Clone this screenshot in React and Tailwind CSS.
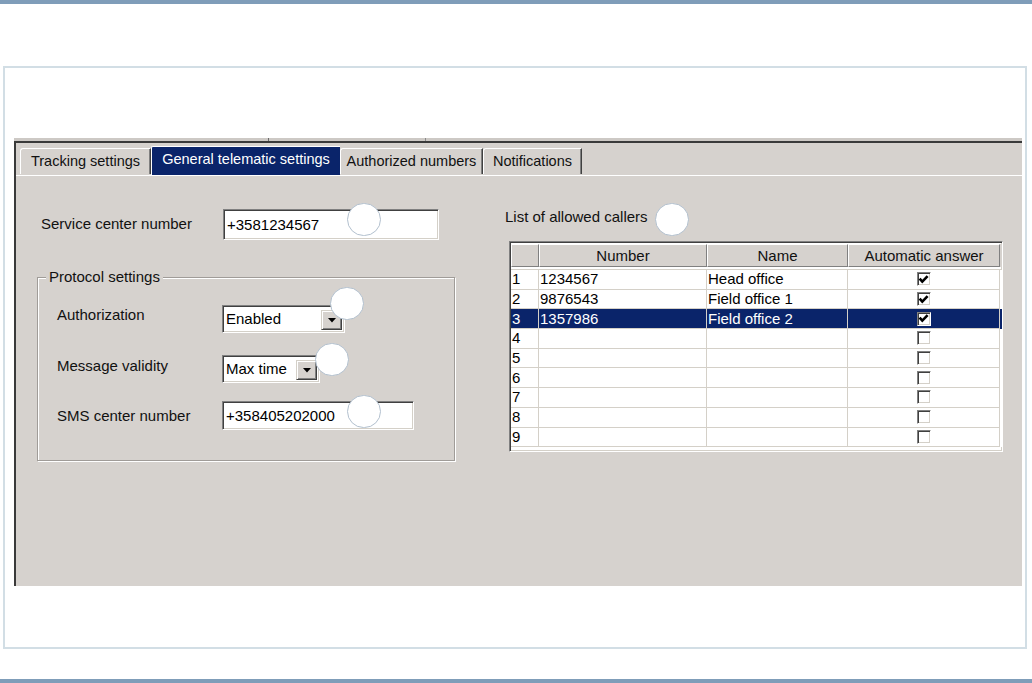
const GRAY = "bg-[#d6d2ce]";

function Inset({ className = "", children }) {
  return (
    <div
      className={`bg-white border border-t-[#808080] border-l-[#808080] border-b-white border-r-white shadow-[inset_1px_1px_0_#404040,inset_-1px_-1px_0_#d4d0c8] ${className}`}
    >
      {children}
    </div>
  );
}

function TextBox({ w, h, value }) {
  return (
    <Inset className={`${w} ${h} flex items-center pl-[3px]`}>
      <span className="text-[15px] leading-[18px] text-black">{value}</span>
    </Inset>
  );
}

function Combo({ w, value }) {
  return (
    <Inset className={`${w} h-[28px] flex items-stretch pl-[3px] pr-[2px] py-[2px]`}>
      <span className="flex-1 flex items-center text-[15px] leading-[18px] text-black">{value}</span>
      <div className="w-[21px] h-[20px] self-end bg-[#d6d2ce] border border-t-[#d4d0c8] border-l-[#d4d0c8] border-b-[#404040] border-r-[#404040] shadow-[inset_1px_1px_0_#ffffff,inset_-1px_-1px_0_#808080] flex items-center justify-center">
        <svg width="8" height="5" viewBox="0 0 8 5">
          <path d="M0 0 H8 L4 4.5 Z" fill="#000" />
        </svg>
      </div>
    </Inset>
  );
}

function CheckBox({ checked }) {
  return (
    <div className="w-[14px] h-[14px] bg-white border border-t-[#808080] border-l-[#808080] border-b-white border-r-white shadow-[inset_1px_1px_0_#404040,inset_-1px_-1px_0_#d4d0c8] flex items-center justify-center">
      {checked && (
        <svg width="11" height="11" viewBox="0 0 11 11">
          <path d="M1.6 4.6 L4.3 7.6 L9.6 2.2" stroke="#000" strokeWidth="2.6" fill="none" />
        </svg>
      )}
    </div>
  );
}

function Tab({ w, label, selected }) {
  if (selected) {
    return (
      <div className={`${w} h-[29px] bg-[#0a246a] text-white border-t border-l border-white rounded-tl-[2px] flex items-center justify-center pb-[4px] text-[14.5px] leading-[17px]`}>
        {label}
      </div>
    );
  }
  return (
    <div className={`${w} h-[26px] mb-[1px] ${GRAY} border-t border-l border-white border-r border-r-[#404040] shadow-[inset_-1px_0_0_#808080] rounded-tl-[3px] flex items-center justify-center text-[14.5px] leading-[17px] text-[#111]`}>
      {label}
    </div>
  );
}

function Circle({ pos }) {
  return (
    <div className={`absolute ${pos} w-[34px] h-[33px] rounded-full bg-white border border-[#b2c0ce]`} />
  );
}

const rows = [
  { n: "1", num: "1234567", name: "Head office", c: true },
  { n: "2", num: "9876543", name: "Field office 1", c: true },
  { n: "3", num: "1357986", name: "Field office 2", c: true, sel: true },
  { n: "4", num: "", name: "", c: false },
  { n: "5", num: "", name: "", c: false },
  { n: "6", num: "", name: "", c: false },
  { n: "7", num: "", name: "", c: false },
  { n: "8", num: "", name: "", c: false },
  { n: "9", num: "", name: "", c: false },
];

function Grid() {
  const cell = "border-r border-b border-[#d4d0c8] h-full flex items-center";
  return (
    <Inset className="w-[494px] h-[211px] flex flex-col overflow-hidden">
      <div className={`flex h-[23px] shrink-0 ${GRAY} mt-[2px] ml-[1px]`}>
        {[
          ["w-[28px]", ""],
          ["w-[168px]", "Number"],
          ["w-[141px]", "Name"],
          ["w-[152px]", "Automatic answer"],
        ].map(([w, t], i) => (
          <div
            key={i}
            className={`${w} h-full border-t border-l border-white border-r border-r-[#808080] border-b border-b-[#808080] flex items-center justify-center text-[15px] leading-[18px] text-[#111]`}
          >
            {t}
          </div>
        ))}
      </div>
      <div className="h-[3px] shrink-0 border-b border-[#d4d0c8] ml-[1px]" />
      {rows.map((r) => (
        <div
          key={r.n}
          className={`flex h-[19.7px] shrink-0 ml-[1px] text-[15px] leading-[18px] ${r.sel ? "bg-[#0a246a] text-white" : "bg-white text-black"}`}
        >
          <div className={`${cell} w-[28px] pl-[1px]`}>{r.n}</div>
          <div className={`${cell} w-[168px] pl-[1px]`}>{r.num}</div>
          <div className={`${cell} w-[141px] pl-[1px]`}>{r.name}</div>
          <div className={`${cell} w-[152px] justify-center`}>
            <CheckBox checked={r.c} />
          </div>
        </div>
      ))}
    </Inset>
  );
}

export default function App() {
  return (
    <div className="w-[1032px] h-[683px] bg-white flex flex-col font-['Liberation_Sans',Arial,sans-serif] text-black">
      <div className="h-[4px] shrink-0 bg-[#7f9db9]" />
      <div className="mt-[62px] ml-[3px] w-[1024px] h-[583px] shrink-0 border-2 border-[#d2dee5] pt-[70px] pl-[9px]">
        <div className={`w-[1008px] h-[448px] ${GRAY} flex flex-col`}>
          <div className="h-[3px] shrink-0 bg-[#cdc9c5] flex">
            <div className="ml-[254px] w-[1px] h-full bg-[#6a6a6a]" />
            <div className="ml-[156px] w-[1px] h-full bg-[#8a8a8a]" />
          </div>
          <div className="flex-1 border-t-2 border-l-2 border-[#3a3a3a] flex flex-col">
            <div className="h-[32px] shrink-0 flex items-end pl-[4px]">
              <Tab w="w-[131px]" label="Tracking settings" />
              <Tab w="w-[189px]" label="General telematic settings" selected />
              <Tab w="w-[143px]" label="Authorized numbers" />
              <Tab w="w-[99px]" label="Notifications" />
            </div>
            <div className="flex-1 relative border-t border-white flex">
              {/* Left column */}
              <div className="ml-[21px] w-[418px] pt-[33px] flex flex-col">
                <div className="flex items-center">
                  <span className="w-[186px] pl-[4px] pb-[2px] text-[15px] leading-[17px] text-[#111]">Service center number</span>
                  <TextBox w="w-[216px]" h="h-[31px]" value="+3581234567" />
                </div>
                <div className="mt-[37px] h-[184px] border border-[#a09c98] shadow-[inset_1px_1px_0_#ffffff,1px_1px_0_#ffffff] flex flex-col">
                  <span className={`-mt-[10px] ml-[8px] px-[3px] w-fit ${GRAY} text-[15px] leading-[17px] text-[#111]`}>Protocol settings</span>
                  <div className="mt-[20px] flex items-center">
                    <span className="ml-[19px] w-[165px] pb-[9px] text-[15px] leading-[17px] text-[#111]">Authorization</span>
                    <Combo w="w-[123px]" value="Enabled" />
                  </div>
                  <div className="mt-[22px] flex items-center">
                    <span className="ml-[19px] w-[165px] pb-[8px] text-[15px] leading-[17px] text-[#111]">Message validity</span>
                    <Combo w="w-[98px]" value="Max time" />
                  </div>
                  <div className="mt-[18px] flex items-center">
                    <span className="ml-[19px] w-[165px] pb-[1px] text-[15px] leading-[17px] text-[#111]">SMS center number</span>
                    <TextBox w="w-[192px]" h="h-[29px]" value="+358405202000" />
                  </div>
                </div>
              </div>
              {/* Right column */}
              <div className="ml-[50px] pt-[33px] flex flex-col">
                <span className="text-[15px] leading-[17px] -mt-[1px] text-[#111]">List of allowed callers</span>
                <div className="mt-[16px] ml-[4px]">
                  <Grid />
                </div>
              </div>

              <Circle pos="left-[331px] top-[27px]" />
              <Circle pos="left-[314px] top-[111px]" />
              <Circle pos="left-[299px] top-[167px]" />
              <Circle pos="left-[331px] top-[219px]" />
              <Circle pos="left-[639px] top-[27px]" />
            </div>
          </div>
        </div>
      </div>
      <div className="mt-[30px] h-[4px] shrink-0 bg-[#7f9db9]" />
    </div>
  );
}
